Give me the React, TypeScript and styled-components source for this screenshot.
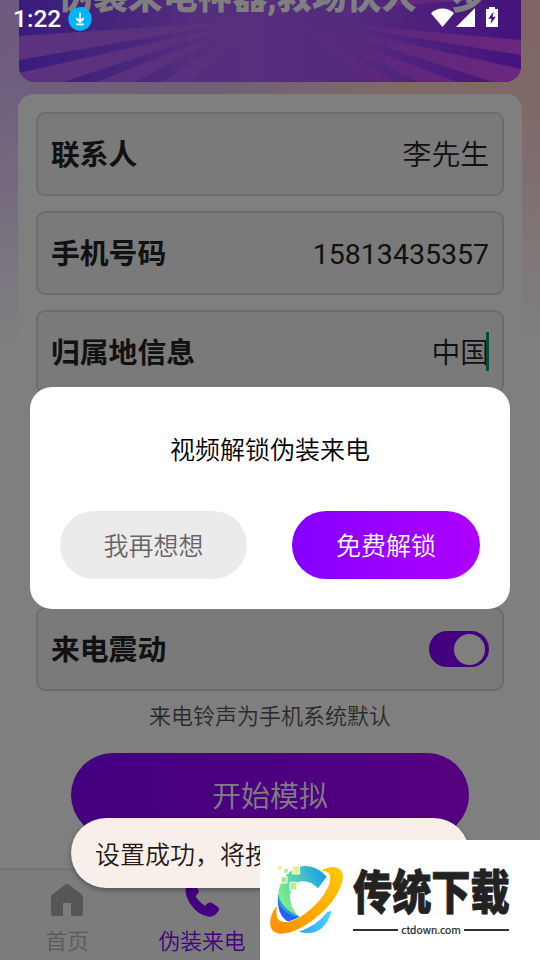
import React from "react";
import styled, { createGlobalStyle } from "styled-components";

const GlobalStyle = createGlobalStyle`
  * { box-sizing: border-box; }
  body { margin: 0; }
`;

const Screen = styled.main`
  position: relative;
  width: 540px;
  height: 960px;
  overflow: hidden;
  background: #fff;
  font-family: Roboto, "Noto Sans CJK SC", sans-serif;
`;

const Page = styled.div`
  display: flex;
  flex-direction: column;
  height: 960px;
  background:
    linear-gradient(180deg, rgba(255, 255, 255, 0) 0, rgba(255, 255, 255, 0.12) 90px, #fff 345px),
    linear-gradient(97deg, #dab4fe 0, #dcb8e4 35%, #ffd2c4 62%, #ffc2cc 100%);
`;

const Banner = styled.header`
  position: relative;
  width: 502px;
  height: 82px;
  margin: 0 0 0 19px;
  overflow: hidden;
  border-radius: 0 0 16px 16px;
  background: #a458ff;
  svg { display: block; }
`;

const Slogan = styled.div`
  position: absolute;
  left: 39px;
  top: -28px;
  white-space: nowrap;
  color: #fff;
  font-size: 34.9px;
  line-height: 52px;
  font-weight: 900;
`;

const Card = styled.section`
  display: flex;
  flex-direction: column;
  flex: 1;
  margin: 12px 18px 0;
  padding: 18px 18px 0;
  border-radius: 16px 16px 0 0;
  background: #fff;
`;

const Fields = styled.div`
  display: flex;
  flex-direction: column;
  gap: 15px;
`;

const Field = styled.div`
  display: flex;
  align-items: center;
  justify-content: space-between;
  height: 84px;
  padding: 0 13px;
  border: 2px solid #d8d8d8;
  border-radius: 9px;
  background: #f4f4f4;
  color: #222;
  font-size: 28.8px;
  line-height: 42px;
`;

const Label = styled.span`
  padding-top: 2px;
  font-weight: 700;
`;

const Value = styled.span<{ $focused?: boolean; $numeric?: boolean }>`
  position: relative;
  display: flex;
  padding-top: ${(p) => (p.$numeric ? "4px" : "2px")};
  font-size: ${(p) => (p.$numeric ? "28.5px" : "28.8px")};
  font-weight: ${(p) => (p.$numeric ? 400 : 350)};
  &::after {
    content: "";
    display: ${(p) => (p.$focused ? "block" : "none")};
    position: absolute;
    right: 0;
    top: 2px;
    width: 3px;
    height: 39px;
    background: #009a80;
  }
`;

const Switch = styled.span`
  display: flex;
  align-items: center;
  justify-content: flex-end;
  width: 60px;
  height: 36px;
  padding: 0 4px;
  border-radius: 18px;
  background: #8600ff;
  &::after {
    content: "";
    width: 31px;
    height: 31px;
    border-radius: 50%;
    background: #fff;
  }
`;

const Hint = styled.p`
  margin: 9px 0 0;
  text-align: center;
  color: #555;
  font-size: 22px;
  font-weight: 350;
  line-height: 33px;
`;

const StartButton = styled.button`
  align-self: center;
  flex: none;
  width: 398px;
  height: 84px;
  margin-top: 20px;
  padding: 0 0 3px;
  border: 0;
  border-radius: 42px;
  background: linear-gradient(90deg, #8600ff, #aa00ff);
  color: #fff;
  font: 350 29px Roboto, "Noto Sans CJK SC", sans-serif;
`;

const Nav = styled.nav`
  flex: none;
  display: grid;
  grid-template-columns: repeat(4, 135px);
  height: 92px;
  border-top: 3px solid #eaeaea;
  background: #f8f8f8;
`;

const NavItem = styled.div<{ $active?: boolean }>`
  display: flex;
  flex-direction: column;
  align-items: center;
  padding: 13px 1px 0 0;
  color: ${(p) => (p.$active ? "#8600ff" : "#b4b7ba")};
  font-size: 21.8px;
  font-weight: 350;
  line-height: 30px;
  svg { display: block; margin-bottom: 11px; }
`;

const Scrim = styled.div`
  position: absolute;
  inset: 0;
  display: flex;
  justify-content: center;
  align-items: flex-start;
  padding-top: 387px;
  background: rgba(0, 0, 0, 0.5);
`;

const Dialog = styled.div`
  display: flex;
  flex-direction: column;
  width: 480px;
  height: 222px;
  padding: 45px 30px 30px;
  justify-content: space-between;
  border-radius: 22px;
  background: #fff;
`;

const DialogTitle = styled.div`
  text-align: center;
  color: #000;
  font-size: 25px;
  font-weight: 350;
  line-height: 37px;
`;

const Actions = styled.div`
  display: grid;
  grid-template-columns: 187px 188px;
  justify-content: space-between;
`;

const Action = styled.button<{ $primary?: boolean }>`
  height: 68px;
  padding: 0 0 2px;
  border: 0;
  border-radius: 34px;
  background: ${(p) => (p.$primary ? "linear-gradient(90deg, #8400ff, #ad00ff)" : "#ebebeb")};
  color: ${(p) => (p.$primary ? "#fff" : "#666")};
  font: 350 25px Roboto, "Noto Sans CJK SC", sans-serif;
`;

const StatusBar = styled.div`
  position: absolute;
  left: 0;
  top: 0;
  width: 540px;
  height: 36px;
  display: flex;
  align-items: center;
  padding: 1px 41px 0 13px;
  color: #fff;
`;

const Clock = styled.span`
  padding-top: 1px;
  font-size: 24.5px;
  line-height: 32px;
  font-weight: 500;
  margin-right: 7px;
`;

const StatusIcons = styled.span`
  margin-left: auto;
  display: flex;
  padding-bottom: 3px;
`;

const Toast = styled.div`
  position: absolute;
  left: 71px;
  top: 818px;
  width: 398px;
  height: 70px;
  display: flex;
  align-items: center;
  padding: 0 0 1px 24px;
  border-radius: 35px;
  background: #f9efea;
  box-shadow: 0 2px 5px rgba(0, 0, 0, 0.35);
  color: #211a16;
  font-size: 25px;
  font-weight: 350;
`;

const Watermark = styled.div`
  position: absolute;
  right: 0;
  bottom: 0;
  display: flex;
  width: 280px;
  height: 120px;
  padding: 23px 0 0 8px;
  background: #fff;
  svg { flex: none; display: block; }
`;

const BrandBlock = styled.div`
  width: 158px;
  margin-left: 8px;
`;

const BrandName = styled.div`
  height: 58px;
  display: flex;
  align-items: center;
  padding-top: 2px;
  color: #222;
  font-size: 39.2px;
  line-height: 56px;
  font-weight: 900;
  transform: scaleY(1.19);
  -webkit-text-stroke: 0.7px #222;
  white-space: nowrap;
`;

const BrandSite = styled.div`
  display: flex;
  align-items: center;
  justify-content: space-between;
  width: 156px;
  height: 16px;
  margin-top: 1px;
  color: #222;
  font: 10.3px "Noto Sans CJK SC", sans-serif;
  line-height: 16px;
  -webkit-text-stroke: 0.2px #222;
  &::before, &::after {
    content: "";
    width: 45px;
    height: 2px;
    background: #333;
  }
`;

const Rays = () => (
  <svg width="502" height="82" viewBox="19 0 502 82">
    <defs>
      <linearGradient id="rayLeft" gradientUnits="userSpaceOnUse" x1="19" y1="0" x2="270" y2="0">
        <stop offset="0" stopColor="#b865fc" />
        <stop offset="1" stopColor="#b360fb" />
      </linearGradient>
      <linearGradient id="rayRight" gradientUnits="userSpaceOnUse" x1="521" y1="0" x2="290" y2="0">
        <stop offset="0" stopColor="#d44efa" />
        <stop offset=".5" stopColor="#c050fa" />
        <stop offset="1" stopColor="#b45afa" stopOpacity="0" />
      </linearGradient>
      <linearGradient id="base" x1="0" y1="0" x2="1" y2="0">
        <stop offset="0" stopColor="#7038fc" />
        <stop offset=".12" stopColor="#8244f8" />
        <stop offset=".34" stopColor="#a85afa" />
        <stop offset=".46" stopColor="#b05efb" />
        <stop offset=".66" stopColor="#a856fa" />
        <stop offset=".86" stopColor="#9838f8" />
        <stop offset="1" stopColor="#8826f8" />
      </linearGradient>
    </defs>
    <rect x="19" width="502" height="82" fill="url(#base)" />
    <path d="M19 36 245 21 19 60z" fill="url(#rayLeft)" />
    <path d="M19 73 245 22 63 82H19z" fill="url(#rayLeft)" />
    <path d="M97 82 250 22 135 82z" fill="url(#rayLeft)" />
    <path d="M163 82 255 22 190 82z" fill="url(#rayLeft)" />
    <path d="M521 40 320 22 521 55z" fill="url(#rayRight)" />
    <path d="M521 69 310 22 492 82H521z" fill="url(#rayRight)" />
    <path d="M457 82 300 22 418 82z" fill="url(#rayRight)" />
    <path d="M395 82 300 22 362 82z" fill="url(#rayRight)" />
    <path d="M470 0H400L320 12z" fill="url(#rayRight)" />
  </svg>
);

const DownloadBadge = () => (
  <svg width="24" height="24" viewBox="0 0 24 24">
    <circle cx="12" cy="12" r="11.7" fill="#00b4fd" />
    <path d="M12 5.8v8.4M8.3 11.2l3.7 3.6 3.7-3.6M8 17.4h8" fill="none" stroke="#fff" strokeWidth="1.9" />
  </svg>
);

const SystemIcons = () => (
  <svg width="68" height="20" viewBox="431 7 68 20" fill="#fff">
    <path d="M431 13.3C437 6.8 448 6.8 454 13.3L442.5 27z" />
    <path d="M475 8V27H456z" />
    <path
      fillRule="evenodd"
      d="M489 7h6v2h3v18h-12V9h3zM493.6 11.5l-5.4 7.3h3.3l-1 5.3 5.4-7.4h-3.3z"
    />
  </svg>
);

const HomeIcon = () => (
  <svg width="32" height="32" viewBox="0 0 32 32">
    <path
      fill="#a9acaf"
      d="M14.2.7q1.8-1.3 3.6 0L30.2 10Q32 11.3 32 13.4V29.5Q32 32 29.5 32H20V19h-8v13H2.5Q0 32 0 29.5V13.4Q0 11.3 1.8 10z"
    />
  </svg>
);

const PhoneIcon = () => (
  <svg width="34" height="32" viewBox="0 0 34 32" overflow="visible">
    <path
      fill="#8600ff"
      d="M4.2-1Q7.4-2.5 9.2.5L13.4 6Q14.8 8 12.5 10L10.6 12.2Q13 17 19.8 21.7L23.2 19Q25 17.8 27 19L33 23Q35 24.5 33.5 26.8 30 33 24 32.7 13 31.3 5 19.5-3.5 5 4.2-1z"
    />
  </svg>
);

const BrandLogo = () => (
  <svg width="77" height="74" viewBox="24 189 231 222">
    <defs>
      <linearGradient id="cGrad" x1="0" y1=".7" x2="1" y2=".2">
        <stop offset="0" stopColor="#8cf27b" />
        <stop offset=".45" stopColor="#55d4b0" />
        <stop offset="1" stopColor="#159cf0" />
      </linearGradient>
      <linearGradient id="orbit" x1="0" y1="1" x2="1" y2="0">
        <stop offset="0" stopColor="#ff8d00" />
        <stop offset="1" stopColor="#ffca00" />
      </linearGradient>
      <linearGradient id="tail" x1="0" y1="0" x2="1" y2="0">
        <stop offset="0" stopColor="#26a3fa" />
        <stop offset="1" stopColor="#49d5ff" />
      </linearGradient>
    </defs>
    <path d="M118 200Q165 190 200 230L174 265Q151 240 123 244 91 252 90 294 92 330 122 354L88 366Q48 337 55 280 61 221 118 200z" fill="url(#cGrad)" />
    <path d="M54 283Q60 325 120 352L88 367Q49 350 54 283z" fill="#2563f5" />
    <path d="M54 283Q62 314 88 336L120 352Q94 350 72 331 58 318 54 300z" fill="#229ff5" />
    <path d="M215 333Q195 399 143 399 130 399 117 395 172 376 202 336z" fill="url(#tail)" />
    <path
      d="M183 213Q211 196 232 203 255 213 246 247 229 306 164 356 101 404 56 401 22 394 33 350 39 330 51 318 45 354 59 362 83 376 130 345 184 307 206 258 222 209 183 213z"
      fill="url(#orbit)"
      stroke="#fff"
      strokeWidth="3"
      paintOrder="stroke"
    />
    <g stroke="#fff" strokeWidth="3">
      <path d="M52 197h14v14H52z" fill="#e4f2a1" />
      <path d="M71 205h14v15H71z" fill="#b9ed98" />
      <path d="M97 197h22v25H97z" fill="#e0f295" />
      <path d="M63 230h18v19H63z" fill="#abe990" />
      <path d="M90 247h20v23H90z" fill="#b6ef96" />
    </g>
  </svg>
);

export default function App() {
  return (
    <Screen>
      <GlobalStyle />
      <Page>
        <Banner>
          <Rays />
          <Slogan>伪装来电神器,救场快人一步</Slogan>
        </Banner>
        <Card>
          <Fields>
            <Field>
              <Label>联系人</Label>
              <Value>李先生</Value>
            </Field>
            <Field>
              <Label>手机号码</Label>
              <Value $numeric>15813435357</Value>
            </Field>
            <Field>
              <Label>归属地信息</Label>
              <Value $focused>中国</Value>
            </Field>
            <Field />
            <Field />
            <Field>
              <Label>来电震动</Label>
              <Switch />
            </Field>
          </Fields>
          <Hint>来电铃声为手机系统默认</Hint>
          <StartButton>开始模拟</StartButton>
        </Card>
        <Nav>
          <NavItem>
            <HomeIcon />
            首页
          </NavItem>
          <NavItem $active>
            <PhoneIcon />
            伪装来电
          </NavItem>
        </Nav>
      </Page>
      <Scrim>
        <Dialog>
          <DialogTitle>视频解锁伪装来电</DialogTitle>
          <Actions>
            <Action>我再想想</Action>
            <Action $primary>免费解锁</Action>
          </Actions>
        </Dialog>
      </Scrim>
      <Toast>设置成功，将按</Toast>
      <StatusBar>
        <Clock>1:22</Clock>
        <DownloadBadge />
        <StatusIcons>
          <SystemIcons />
        </StatusIcons>
      </StatusBar>
      <Watermark>
        <BrandLogo />
        <BrandBlock>
          <BrandName>传统下载</BrandName>
          <BrandSite>ctdown.com</BrandSite>
        </BrandBlock>
      </Watermark>
    </Screen>
  );
}
